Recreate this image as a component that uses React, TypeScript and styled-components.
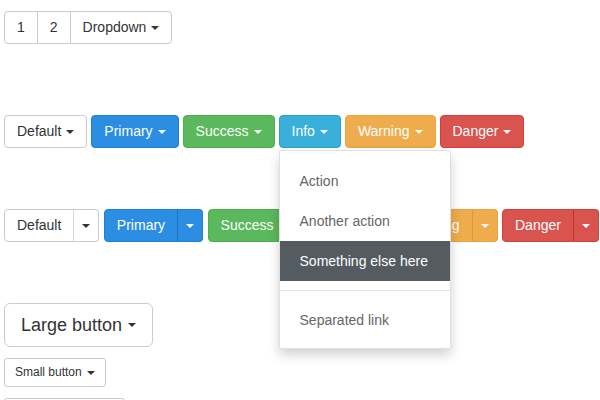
import React from "react";
import styled, { createGlobalStyle, css } from "styled-components";

const Global = createGlobalStyle`
  html, body { margin: 0; padding: 0; background: #fff; }
  body { font-family: "Liberation Sans", Arial, Helvetica, sans-serif; font-size: 14px; color: #333; }
  * { box-sizing: border-box; }
`;

type Variant = "default" | "primary" | "success" | "info" | "warning" | "danger";

const palette: Record<Variant, { bg: string; border: string; color: string; split: string }> = {
  default: { bg: "#ffffff", border: "#cccccc", color: "#333333", split: "#d6d6d6" },
  primary: { bg: "#2b8ee3", border: "#217ecf", color: "#ffffff", split: "#1d72bd" },
  success: { bg: "#5cb85c", border: "#4cae4c", color: "#ffffff", split: "#47a447" },
  info: { bg: "#38b0da", border: "#2aa2cc", color: "#ffffff", split: "#2596be" },
  warning: { bg: "#efac4d", border: "#eca23a", color: "#ffffff", split: "#e09830" },
  danger: { bg: "#d9534f", border: "#d43f3a", color: "#ffffff", split: "#c9302c" },
};

type Size = "md" | "lg" | "sm" | "xs";

const sizes: Record<Size, ReturnType<typeof css>> = {
  md: css`padding: 6px 12px; font-size: 14px; line-height: 19px; border-radius: 4px;`,
  lg: css`padding: 10px 16px; font-size: 18px; line-height: 22px; border-radius: 6px;`,
  sm: css`padding: 5px 10px; font-size: 12px; line-height: 17px; border-radius: 3px;`,
  xs: css`padding: 1px 5px; font-size: 12px; line-height: 18px; border-radius: 3px;`,
};

const Page = styled.div`
  padding: 11px 4px 0 4px;
  display: flex;
  flex-direction: column;
  align-items: flex-start;
`;

const Row = styled.div<{ $mt?: number; $z?: number; $gap?: number }>`
  display: flex;
  align-items: center;
  gap: ${(p) => p.$gap ?? 4}px;
  margin-top: ${(p) => p.$mt ?? 0}px;
  position: relative;
  z-index: ${(p) => p.$z ?? 0};
`;

const Btn = styled.button<{ $v: Variant; $size?: Size }>`
  font-family: inherit;
  display: inline-flex;
  align-items: center;
  white-space: nowrap;
  cursor: pointer;
  border: 1px solid ${(p) => palette[p.$v].border};
  background: ${(p) => palette[p.$v].bg};
  color: ${(p) => palette[p.$v].color};
  ${(p) => sizes[p.$size ?? "md"]}
`;

const Group = styled.div`
  display: inline-flex;
  position: relative;
  & > button { border-radius: 0; }
  & > button + button { margin-left: -1px; }
  & > button:first-child { border-top-left-radius: 4px; border-bottom-left-radius: 4px; }
  & > button:last-child { border-top-right-radius: 4px; border-bottom-right-radius: 4px; }
`;

const GroupBtn = styled(Btn)<{ $splitLeft?: boolean }>`
  ${(p) => p.$splitLeft && css`border-left-color: ${palette[p.$v].split};`}
`;

const ToggleBtn = styled(GroupBtn)`
  padding-left: 8px;
  padding-right: 8px;
`;

const Caret = styled.span<{ $big?: boolean; $gap?: number }>`
  display: inline-block;
  width: 0;
  height: 0;
  margin-left: ${(p) => p.$gap ?? 5}px;
  border-top: ${(p) => (p.$big ? 5 : 4)}px solid currentColor;
  border-left: ${(p) => (p.$big ? 5 : 4)}px solid transparent;
  border-right: ${(p) => (p.$big ? 5 : 4)}px solid transparent;
  vertical-align: middle;
`;

const DropWrap = styled.div`
  position: relative;
  display: inline-flex;
`;

const Menu = styled.ul`
  position: absolute;
  top: calc(100% + 2px);
  left: 0;
  z-index: 10;
  margin: 0;
  padding: 10px 0 8px;
  list-style: none;
  min-width: 172px;
  background: #fff;
  border: 1px solid rgba(0, 0, 0, 0.12);
  border-radius: 2px;
  box-shadow: 0 6px 12px rgba(0, 0, 0, 0.175);
`;

const MenuItem = styled.li<{ $active?: boolean }>`
  padding: 10px 20px;
  line-height: 20px;
  font-size: 14px;
  white-space: nowrap;
  color: ${(p) => (p.$active ? "#ffffff" : "#666666")};
  background: ${(p) => (p.$active ? "#545c61" : "transparent")};
`;

const Divider = styled.li`
  height: 1px;
  margin: 9px 0;
  background: #e5e5e5;
`;

const variants: { v: Variant; label: string }[] = [
  { v: "default", label: "Default" },
  { v: "primary", label: "Primary" },
  { v: "success", label: "Success" },
  { v: "info", label: "Info" },
  { v: "warning", label: "Warning" },
  { v: "danger", label: "Danger" },
];

export default function App() {
  return (
    <>
      <Global />
      <Page>
        <Row>
          <Group>
            <GroupBtn $v="default">1</GroupBtn>
            <GroupBtn $v="default">2</GroupBtn>
            <GroupBtn $v="default">
              Dropdown<Caret />
            </GroupBtn>
          </Group>
        </Row>

        <Row $mt={71} $z={2}>
          {variants.map(({ v, label }) =>
            v === "info" ? (
              <DropWrap key={v}>
                <Btn $v={v}>
                  {label}
                  <Caret />
                </Btn>
                <Menu>
                  <MenuItem>Action</MenuItem>
                  <MenuItem>Another action</MenuItem>
                  <MenuItem $active>Something else here</MenuItem>
                  <Divider />
                  <MenuItem>Separated link</MenuItem>
                </Menu>
              </DropWrap>
            ) : (
              <Btn key={v} $v={v}>
                {label}
                <Caret />
              </Btn>
            )
          )}
        </Row>

        <Row $mt={61} $z={1} $gap={4.5}>
          {variants.map(({ v, label }) => (
            <Group key={v}>
              <GroupBtn $v={v}>{label}</GroupBtn>
              <ToggleBtn $v={v} $splitLeft>
                <Caret $gap={0} />
              </ToggleBtn>
            </Group>
          ))}
        </Row>

        <Row $mt={61}>
          <Btn $v="default" $size="lg">
            Large button<Caret $gap={6} />
          </Btn>
        </Row>

        <Row $mt={11}>
          <Btn $v="default" $size="sm">
            Small button<Caret />
          </Btn>
        </Row>

        <Row $mt={11}>
          <Btn $v="default" $size="xs">
            Extra small button<Caret />
          </Btn>
        </Row>
      </Page>
    </>
  );
}
